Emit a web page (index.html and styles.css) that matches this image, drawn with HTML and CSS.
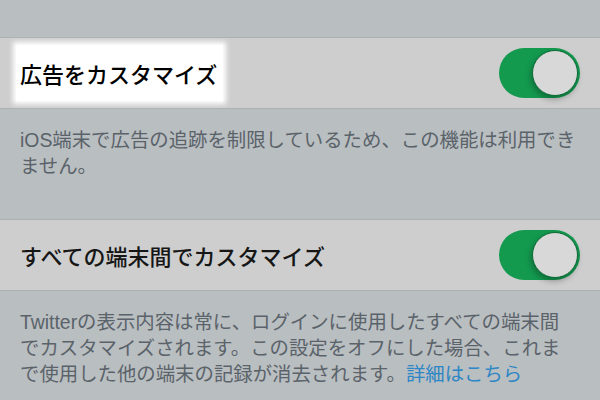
FILE: index.html
```html
<!DOCTYPE html>
<html lang="ja">
<head>
  <meta charset="UTF-8" />
  <title>プライバシー設定</title>
  <meta name="viewport" content="width=device-width, initial-scale=1.0" />
  <link rel="stylesheet" href="styles.css">
</head>
<body>
  <div class="gap"></div>

  <div class="cell">
    <span class="title highlight">広告をカスタマイズ</span>
    <div class="toggle on"><div class="knob"></div></div>
  </div>
  <p class="footer">iOS端末で広告の追跡を制限しているため、この機能は利用できません。</p>

  <div class="cell">
    <span class="title">すべての端末間でカスタマイズ</span>
    <div class="toggle on"><div class="knob"></div></div>
  </div>
  <p class="footer">Twitterの表示内容は常に、ログインに使用したすべての端末間でカスタマイズされます。この設定をオフにした場合、これまで使用した他の端末の記録が消去されます。<a href="#">詳細はこちら</a></p>
</body>
</html>
```

FILE: styles.css
```css
body {
  margin: 0;
  padding: 0;
  background: #b9bec1;
  font-family: 'Liberation Sans', 'Noto Sans CJK JP', sans-serif;
  overflow: hidden;
}

.gap {
  height: 37px;
}

.cell {
  height: 70px;
  display: flex;
  align-items: center;
  justify-content: space-between;
  padding: 0 20px;
  background: #cecece;
  border-top: 1px solid #abb0b3;
  border-bottom: 1px solid #abb0b3;
}

.title {
  font-family: 'Noto Sans CJK JP', sans-serif;
  font-size: 22px;
  font-weight: 500;
  color: #161616;
  line-height: 30px;
}

.highlight {
  color: #000;
  background: #fff;
  padding: 13px 6px 13px 4px;
  margin-left: -4px;
  box-shadow: 0 0 5px 3px #fff;
}

.toggle {
  width: 81px;
  height: 50px;
  box-sizing: border-box;
  border-radius: 25px;
  padding: 2px;
  display: flex;
  justify-content: flex-end;
  align-items: center;
  background: #139a4f;
}

.knob {
  width: 46px;
  height: 46px;
  box-sizing: border-box;
  border-radius: 50%;
  background: #d8d8d8;
  border: 1px solid #0b6b35;
  box-shadow: -1px 3px 6px rgba(0, 0, 0, 0.3);
}

.footer {
  margin: 0;
  padding: 18px 22px 40px 20px;
  font-size: 19.4px;
  line-height: 26px;
  color: #5b636a;
}

.footer a {
  color: #2d86c6;
  text-decoration: none;
}
```
